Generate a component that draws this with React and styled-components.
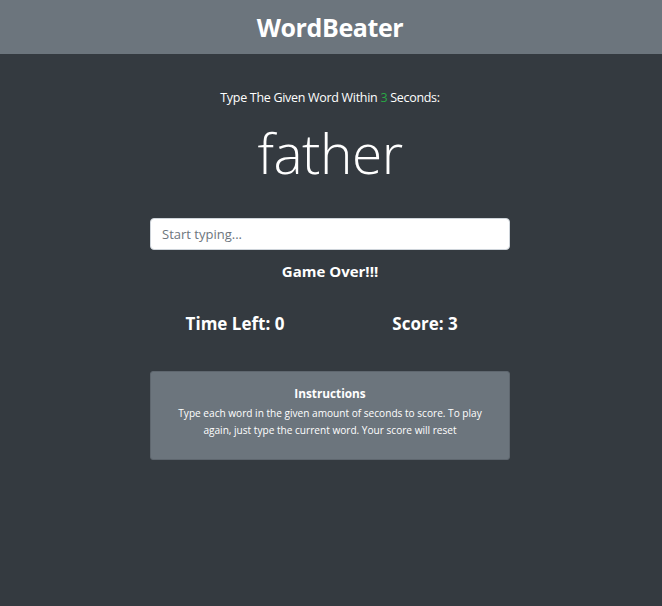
import React, { useState } from 'react'
import styled, { createGlobalStyle } from 'styled-components'

const GlobalStyle = createGlobalStyle`
  * { box-sizing: border-box; }
  html, body {
    margin: 0;
    padding: 0;
    background: #343a40;
    font-family: 'Open Sans', 'Noto Sans', sans-serif;
    color: #fff;
  }
`

const Page = styled.div`
  min-height: 606px;
  background: #343a40;
`

const Header = styled.header`
  height: 54px;
  padding-right: 2px;
  background: #6c757d;
  display: flex;
  align-items: center;
  justify-content: center;
`

const Brand = styled.h1`
  margin: 0;
  font-size: 25px;
  font-weight: 700;
  letter-spacing: -0.4px;
  color: #fff;
`

const Body = styled.div`
  padding-right: 2px;
`

const Main = styled.main`
  width: 360px;
  margin: 0 auto;
  padding-top: 35px;
  display: flex;
  flex-direction: column;
  align-items: center;
`

const Lead = styled.p`
  margin: 0;
  font-size: 12.5px;
  font-weight: 400;
  letter-spacing: -0.3px;
  line-height: 18px;
`

const Green = styled.span`
  color: #28a745;
`

const Word = styled.h2`
  margin: 6px 0 0;
  font-size: 55px;
  font-weight: 300;
  line-height: 80px;
  letter-spacing: -0.5px;
`

const Input = styled.input`
  margin-top: 25px;
  width: 100%;
  height: 32px;
  padding: 0 11px;
  border: 1px solid #ced4da;
  border-radius: 4px;
  font-family: inherit;
  font-size: 13px;
  color: #495057;
  background: #fff;
  outline: none;
  &::placeholder { color: #6c757d; }
`

const Status = styled.h3`
  margin: 10px 0 0;
  font-size: 15px;
  font-weight: 700;
  line-height: 22px;
`

const Stats = styled.div`
  width: 380px;
  margin-top: 30px;
  display: grid;
  grid-template-columns: 1fr 1fr;
`

const Stat = styled.h3`
  margin: 0;
  text-align: center;
  font-size: 17px;
  font-weight: 700;
  line-height: 24px;
`

const Card = styled.div`
  margin-top: 35px;
  width: 100%;
  height: 89px;
  background: #6c757d;
  border: 1px solid #5f676f;
  border-radius: 3px;
  padding: 12px 16px;
  text-align: center;
`

const CardTitle = styled.h5`
  margin: 0 0 3px;
  font-size: 11.8px;
  font-weight: 700;
  line-height: 18px;
`

const CardText = styled.p`
  margin: 0;
  font-size: 10.1px;
  line-height: 17px;
`

export default function App() {
  const [value, setValue] = useState('')
  return (
    <Page>
      <GlobalStyle />
      <Header>
        <Brand>WordBeater</Brand>
      </Header>
      <Body>
        <Main>
          <Lead>Type The Given Word Within <Green>3</Green> Seconds:</Lead>
          <Word>father</Word>
          <Input
            placeholder="Start typing..."
            value={value}
            onChange={e => setValue(e.target.value)}
          />
          <Status>Game Over!!!</Status>
          <Stats>
            <Stat>Time Left: 0</Stat>
            <Stat>Score: 3</Stat>
          </Stats>
          <Card>
            <CardTitle>Instructions</CardTitle>
            <CardText>
              Type each word in the given amount of seconds to score. To play again, just type the current word. Your score will reset
            </CardText>
          </Card>
        </Main>
      </Body>
    </Page>
  )
}
